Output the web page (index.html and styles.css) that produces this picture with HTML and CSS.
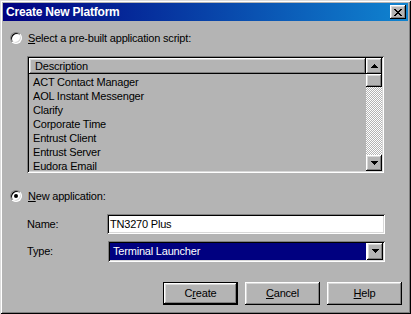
FILE: index.html
```html
<!DOCTYPE html>
<html>
<head>
<meta charset="utf-8">
<link rel="stylesheet" href="styles.css">
</head>
<body>
<div class="window">
  <div class="titlebar">
    <span class="title">Create New Platform</span>
    <span class="close">
      <svg width="8" height="7" viewBox="0 0 8 7" shape-rendering="crispEdges"><path fill="#000" d="M0 0h2v1h-2zM6 0h2v1h-2zM1 1h2v1h-2zM5 1h2v1h-2zM2 2h4v1h-4zM3 3h2v1h-2zM2 4h4v1h-4zM1 5h2v1h-2zM5 5h2v1h-2zM0 6h2v1h-2zM6 6h2v1h-2z"/></svg>
    </span>
  </div>
  <div class="body">
    <div class="option"><span class="radio"></span><span class="opt-label"><u>S</u>elect a pre-built application script:</span></div>
    <div class="listbox">
      <div class="list-main">
        <div class="list-header">Description</div>
        <ul class="rows">
          <li>ACT Contact Manager</li>
          <li>AOL Instant Messenger</li>
          <li>Clarify</li>
          <li>Corporate Time</li>
          <li>Entrust Client</li>
          <li>Entrust Server</li>
          <li>Eudora Email</li>
        </ul>
      </div>
      <div class="scrollbar">
        <div class="raised sb-btn"><svg width="7" height="4" viewBox="0 0 7 4" shape-rendering="crispEdges"><path fill="#000" d="M3 0h1v1h1v1h1v1h1v1h-7v-1h1v-1h1v-1h1z"/></svg></div>
        <div class="raised sb-thumb"></div>
        <div class="sb-track"></div>
        <div class="raised sb-btn"><svg width="7" height="4" viewBox="0 0 7 4" shape-rendering="crispEdges"><path fill="#000" d="M0 0h7v1h-1v1h-1v1h-1v1h-1v-1h-1v-1h-1v-1h-1z"/></svg></div>
      </div>
    </div>
    <div class="option option-new"><span class="radio checked"></span><span class="opt-label"><u>N</u>ew application:</span></div>
    <div class="form">
      <span class="flabel">Name:</span>
      <div class="textbox">TN3270 Plus</div>
      <span class="flabel">Type:</span>
      <div class="combo">
        <span class="combo-value">Terminal Launcher</span>
        <span class="raised combo-btn"><svg width="7" height="4" viewBox="0 0 7 4" shape-rendering="crispEdges"><path fill="#000" d="M0 0h7v1h-1v1h-1v1h-1v1h-1v-1h-1v-1h-1v-1h-1z"/></svg></span>
      </div>
    </div>
    <div class="buttons">
      <div class="btn default">C<u>r</u>eate</div>
      <div class="btn raised"><u>C</u>ancel</div>
      <div class="btn raised"><u>H</u>elp</div>
    </div>
  </div>
</div>
</body>
</html>
```

FILE: styles.css
```css
body {
  margin: 0;
}

.window {
  width: 411px;
  height: 314px;
  box-sizing: border-box;
  padding: 3px;
  background: #b4b4b4;
  font-family: "Liberation Sans", Arial, sans-serif;
  font-size: 11px;
  letter-spacing: -0.2px;
  color: #000;
  display: flex;
  flex-direction: column;
  box-shadow: inset 1px 1px #dcdcdc, inset -1px -1px #000, inset 2px 2px #fff, inset -2px -2px #808080;
}

.raised {
  background: #b4b4b4;
  box-shadow: inset -1px -1px #000, inset 1px 1px #fff, inset -2px -2px #808080, inset 2px 2px #d8d8d8;
}

.titlebar {
  height: 18px;
  flex: none;
  display: flex;
  align-items: center;
  justify-content: space-between;
  padding: 0 2px 0 3px;
  background: linear-gradient(90deg, #000080, #1084d0);
}

.title {
  color: #fff;
  font-weight: bold;
  font-size: 12px;
  letter-spacing: -0.2px;
  line-height: 18px;
}

.close {
  width: 16px;
  height: 14px;
  display: flex;
  align-items: center;
  justify-content: center;
  background: #b4b4b4;
  box-shadow: inset -1px -1px #000, inset 1px 1px #fff, inset -2px -2px #808080, inset 2px 2px #d8d8d8;
}

.close svg {
  display: block;
  margin: 0 0 0 -1px;
}

.body {
  flex: 1;
  display: flex;
  flex-direction: column;
  padding: 11px 0 0 7px;
}

.option {
  display: flex;
  align-items: center;
  gap: 6px;
  height: 12px;
}

.opt-label {
  line-height: 12px;
}

.radio {
  position: relative;
  width: 12px;
  height: 12px;
  flex: none;
  box-sizing: border-box;
  border-radius: 50%;
  border: 1px solid;
  border-color: #808080 #fff #fff #808080;
  background: #fff;
  box-shadow: inset 1px 1px #000, inset -1px -1px #d8d8d8;
}

.radio.checked::after {
  content: "";
  position: absolute;
  left: 3px;
  top: 3px;
  width: 4px;
  height: 4px;
  border-radius: 50%;
  background: #000;
}

.listbox {
  margin: 12px 0 0 17px;
  width: 357px;
  height: 117px;
  box-sizing: border-box;
  padding: 2px;
  display: flex;
  box-shadow: inset 1px 1px #808080, inset -1px -1px #fff, inset 2px 2px #000, inset -2px -2px #d8d8d8;
}

.list-main {
  flex: 1;
  overflow: hidden;
}

.list-header {
  height: 16px;
  line-height: 16px;
  padding-left: 6px;
  box-shadow: inset -1px -1px #000, inset 1px 1px #fff, inset -2px -2px #808080, inset 2px 2px #d8d8d8;
}

.rows {
  list-style: none;
  margin: 0;
  padding: 1px 0 0 4px;
}

.rows li {
  height: 14px;
  line-height: 14px;
  white-space: nowrap;
}

.scrollbar {
  width: 16px;
  flex: none;
  display: flex;
  flex-direction: column;
}

.sb-btn {
  height: 16px;
  flex: none;
  display: flex;
  align-items: center;
  justify-content: center;
}

.sb-btn svg {
  display: block;
}

.sb-thumb {
  height: 13px;
  flex: none;
}

.sb-track {
  flex: 1;
  background: repeating-conic-gradient(#fff 0 25%, #b4b4b4 0 50%) 0 0 / 2px 2px;
}

.option-new {
  margin-top: 17px;
}

.form {
  margin: 12px 0 0 17px;
  display: grid;
  grid-template-columns: 80px 278px;
  grid-auto-rows: 20px;
  row-gap: 7px;
  align-items: center;
}

.textbox {
  height: 20px;
  box-sizing: border-box;
  padding-left: 3px;
  line-height: 20px;
  background: #fff;
  box-shadow: inset 1px 1px #808080, inset -1px -1px #fff, inset 2px 2px #000, inset -2px -2px #d8d8d8;
}

.combo {
  margin-left: 1px;
  height: 21px;
  box-sizing: border-box;
  padding: 2px;
  display: flex;
  background: #b4b4b4;
  box-shadow: inset 1px 1px #808080, inset -1px -1px #fff, inset 2px 2px #000, inset -2px -2px #d8d8d8;
}

.combo-value {
  flex: 1;
  background: #000080;
  color: #fff;
  padding-left: 3px;
  line-height: 17px;
  border-right: 1px solid #fff;
}

.combo-btn {
  width: 16px;
  height: 17px;
  flex: none;
  display: flex;
  align-items: center;
  justify-content: center;
}

.buttons {
  margin-top: 21px;
  display: flex;
  justify-content: flex-end;
  gap: 7px;
  padding-right: 6px;
}

.btn {
  width: 75px;
  height: 23px;
  box-sizing: border-box;
  display: flex;
  align-items: center;
  justify-content: center;
  line-height: 13px;
}

.btn.default {
  background: #b4b4b4;
  box-shadow: inset 0 0 0 1px #000, inset -2px -2px #000, inset 2px 2px #fff, inset -3px -3px #808080, inset 3px 3px #d8d8d8;
}
```
